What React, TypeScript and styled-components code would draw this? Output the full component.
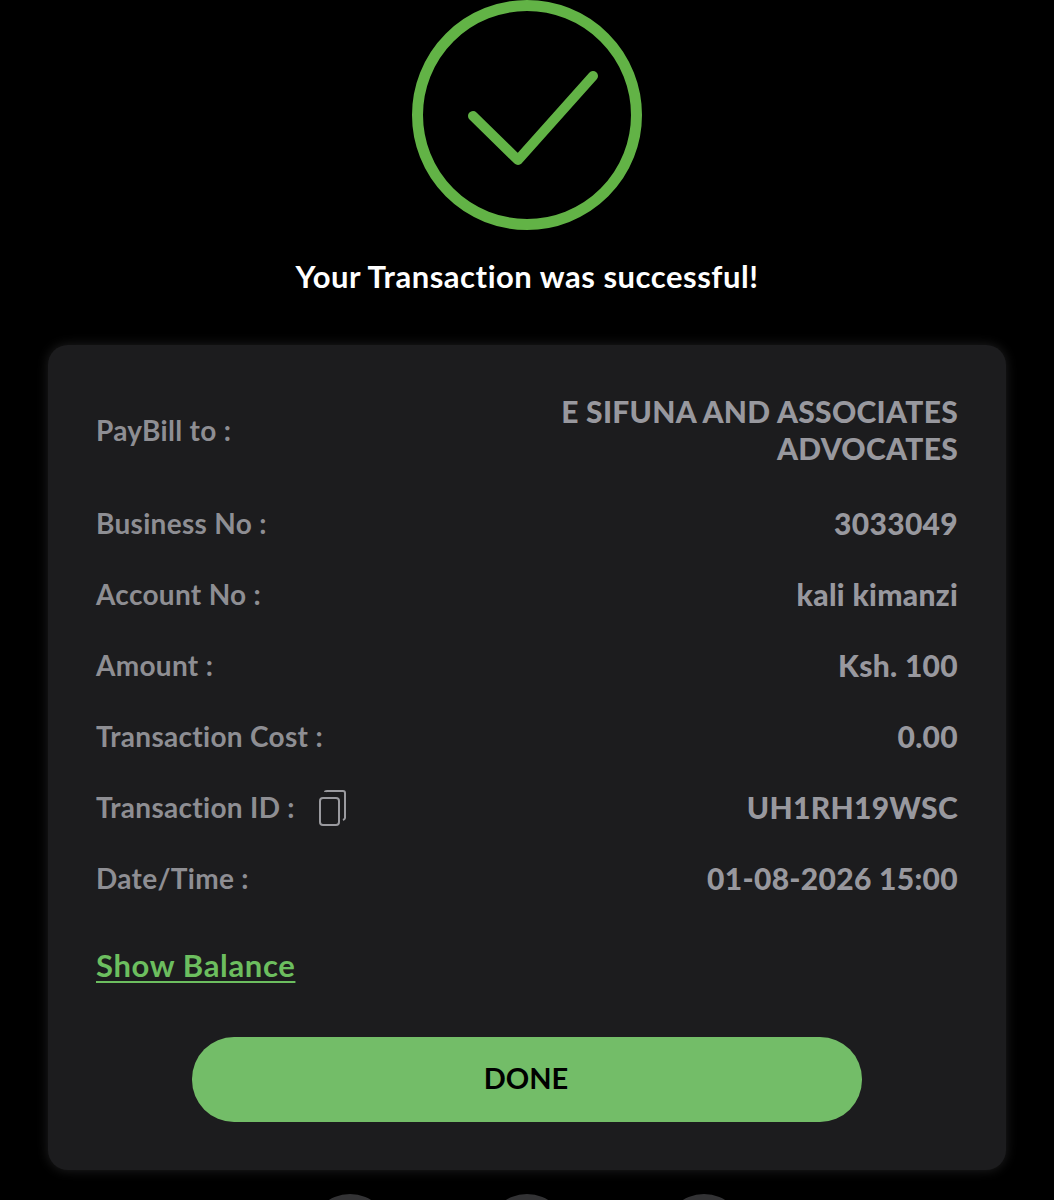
import { createGlobalStyle } from "styled-components";
import styled from "styled-components";

const GlobalStyle = createGlobalStyle`
    html, body {
        margin: 0;
        height: 1200px;
        overflow: hidden;
        background: #000;
    }
    * { box-sizing: border-box; }
`;

const Page = styled.main`
    width: 1054px;
    height: 1200px;
    overflow: hidden;
    display: flex;
    flex-direction: column;
    align-items: center;
    background: #000;
    font-family: "Lato", "Liberation Sans", sans-serif;
    font-variant-ligatures: none;
`;

const SuccessIcon = styled.svg`
    display: block;
    width: 230px;
    height: 230px;
    margin-right: 1px;
    flex-shrink: 0;
`;

const Title = styled.h1`
    margin: 27px 0 0;
    color: #fff;
    font-size: 31px;
    line-height: 38px;
    font-weight: 700;
    letter-spacing: 0.52px;
`;

const Card = styled.section`
    width: 958px;
    height: 825px;
    margin-top: 50px;
    padding: 48px 48px 48px;
    display: flex;
    flex-direction: column;
    flex-shrink: 0;
    background: #1c1c1e;
    border-radius: 20px;
    box-shadow: 0 0 12px rgba(58, 58, 60, 0.55);
`;

const Rows = styled.div`
    display: flex;
    flex-direction: column;
    gap: 34px;
`;

const Row = styled.div<{ $tall?: boolean }>`
    display: flex;
    justify-content: space-between;
    align-items: center;
    margin-bottom: ${(p) => (p.$tall ? "4px" : "0")};
`;

const Label = styled.span`
    display: flex;
    align-items: center;
    gap: 23px;
    color: #8e8e93;
    font-size: 28px;
    line-height: 37px;
    font-weight: 700;
    letter-spacing: 0.3px;
`;

const Value = styled.span`
    max-width: 480px;
    color: #98989e;
    font-size: 30px;
    line-height: 37px;
    font-weight: 900;
    letter-spacing: 0.3px;
    text-align: right;
`;

const CopyIcon = styled.svg`
    display: block;
    width: 28px;
    height: 37px;
`;

const BalanceLink = styled.a`
    align-self: flex-start;
    margin-top: 50px;
    color: #6cbe5f;
    font-size: 31px;
    line-height: 37px;
    font-weight: 700;
    letter-spacing: 0.65px;
    text-decoration: underline;
    text-underline-offset: 4px;
    text-decoration-thickness: 2px;
`;

const DoneButton = styled.button`
    align-self: center;
    width: 670px;
    height: 85px;
    margin-top: 53px;
    padding: 0 2px 4px 0;
    border: none;
    border-radius: 42px;
    background: #73bd68;
    color: #000;
    font-family: inherit;
    font-size: 29px;
    font-weight: 700;
`;

const Dots = styled.div`
    display: flex;
    gap: 97px;
    margin-top: 24px;
    flex-shrink: 0;
`;

const Dot = styled.span`
    display: block;
    width: 80px;
    height: 80px;
    border-radius: 50%;
    background: #333335;
`;

const details = [
    { label: "Business No :", value: "3033049" },
    { label: "Account No :", value: "kali kimanzi" },
    { label: "Amount :", value: "Ksh. 100" },
    { label: "Transaction Cost :", value: "0.00" },
    { label: "Transaction ID :", value: "UH1RH19WSC", copy: true },
    { label: "Date/Time :", value: "01-08-2026 15:00" },
];

export default function App() {
    return (
        <Page>
            <GlobalStyle />
            <SuccessIcon viewBox="0 0 230 230" fill="none">
                <circle cx="115" cy="115" r="109.5" stroke="#62b346" strokeWidth="11" />
                <path d="M61 116 L106 160 L181 76" stroke="#62b346" strokeWidth="10" strokeLinecap="round" strokeLinejoin="round" />
            </SuccessIcon>
            <Title>Your Transaction was successful!</Title>
            <Card>
                <Rows>
                    <Row $tall>
                        <Label>PayBill to :</Label>
                        <Value>E SIFUNA AND ASSOCIATES ADVOCATES</Value>
                    </Row>
                    {details.map((d) => (
                        <Row key={d.label}>
                            <Label>
                                {d.label}
                                {d.copy && (
                                    <CopyIcon viewBox="0 0 28 37" fill="none" stroke="#9a9a9f" strokeWidth="2">
                                        <rect x="2" y="9" width="19" height="27" rx="3" />
                                        <path d="M7 3 Q7 2 9 2 H25 Q27 2 27 4 V29 Q27 30 25 31" />
                                    </CopyIcon>
                                )}
                            </Label>
                            <Value>{d.value}</Value>
                        </Row>
                    ))}
                </Rows>
                <BalanceLink>Show Balance</BalanceLink>
                <DoneButton>DONE</DoneButton>
            </Card>
            <Dots>
                <Dot />
                <Dot />
                <Dot />
            </Dots>
        </Page>
    );
}
